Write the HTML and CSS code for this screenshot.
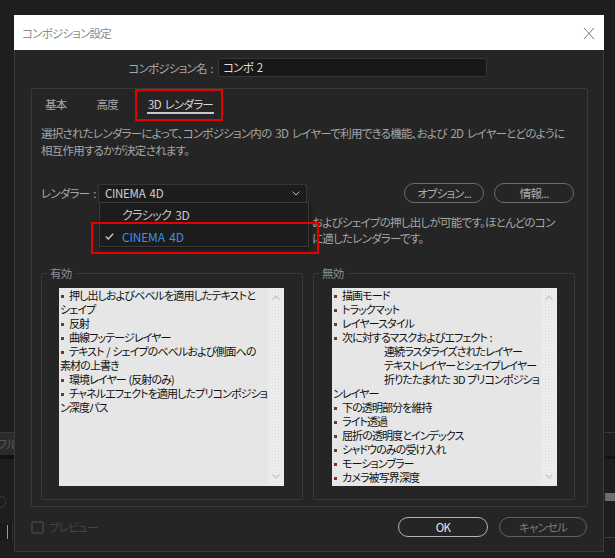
FILE: index.html
```html
<!DOCTYPE html>
<html lang="ja">
<head>
<meta charset="utf-8">
<title>コンポジション設定</title>
<link rel="stylesheet" href="styles.css">
</head>
<body>
<div class="app-bit app-left-btn"><span>フル</span></div>
<div class="app-bit app-left-strip"></div>
<div class="app-bit app-left-icon"></div>
<div class="app-bit app-left-field"></div>
<div class="app-bit app-right-line1"></div>
<div class="app-bit app-right-strip"></div>
<div class="app-bit app-right-bar"></div>
<div class="app-bit app-right-line2"></div>

<div class="dialog">
  <div class="titlebar">
    <span class="title">コンポジション設定</span>
    <svg class="close" width="12" height="13" viewBox="0 0 12 13"><path d="M1 1 L11 12 M11 1 L1 12" stroke="#7a7a7a" stroke-width="1" fill="none"/></svg>
  </div>
  <div class="body">
    <div class="name-row">
      <span class="name-label">コンポジション名 :</span>
      <div class="name-input">コンポ 2</div>
    </div>
    <div class="panel">
      <div class="tabs">
        <span class="tab">基本</span>
        <span class="tab">高度</span>
        <span class="tab active">3D レンダラー</span>
      </div>
      <p class="desc">選択されたレンダラーによって、コンポジション内の 3D レイヤーで利用できる機能、および 2D レイヤーとどのように<br>相互作用するかが決定されます。</p>
      <div class="renderer-row">
        <span class="renderer-label">レンダラー :</span>
        <div class="select">
          <span>CINEMA 4D</span>
          <svg class="chev" width="8" height="5" viewBox="0 0 8 5"><path d="M0.5 0.5 L4 4 L7.5 0.5" stroke="#b8b8b8" stroke-width="1" fill="none"/></svg>
        </div>
        <div class="spacer"></div>
        <button class="pill">オプション...</button>
        <button class="pill">情報...</button>
      </div>
      <p class="renderer-info">およびシェイプの押し出しが可能です。ほとんどのコン<br>に適したレンダラーです。</p>
      <div class="groups">
        <fieldset class="group">
          <legend>有効</legend>
          <div class="listbox">
            <div class="list-text">
              <div class="item"><i class="bullet"></i>押し出しおよびベベルを適用したテキストと<br>シェイプ</div>
              <div class="item"><i class="bullet"></i>反射</div>
              <div class="item"><i class="bullet"></i>曲線フッテージレイヤー</div>
              <div class="item"><i class="bullet"></i>テキスト / シェイプのベベルおよび側面への<br>素材の上書き</div>
              <div class="item"><i class="bullet"></i>環境レイヤー (反射のみ)</div>
              <div class="item"><i class="bullet"></i>チャネルエフェクトを適用したプリコンポジショ<br>ン深度パス</div>
            </div>
            <div class="scrollbar">
              <svg width="8" height="5" viewBox="0 0 8 5"><path d="M0.5 4.5 L4 1 L7.5 4.5" stroke="#c4c4c4" stroke-width="1.2" fill="none"/></svg>
              <svg width="8" height="5" viewBox="0 0 8 5"><path d="M0.5 0.5 L4 4 L7.5 0.5" stroke="#c4c4c4" stroke-width="1.2" fill="none"/></svg>
            </div>
          </div>
        </fieldset>
        <fieldset class="group group-right">
          <legend>無効</legend>
          <div class="listbox">
            <div class="list-text">
              <div class="item"><i class="bullet"></i>描画モード</div>
              <div class="item"><i class="bullet"></i>トラックマット</div>
              <div class="item"><i class="bullet"></i>レイヤースタイル</div>
              <div class="item"><i class="bullet"></i>次に対するマスクおよびエフェクト :</div>
              <div class="item sub">連続ラスタライズされたレイヤー</div>
              <div class="item sub">テキストレイヤーとシェイプレイヤー</div>
              <div class="item sub">折りたたまれた 3D プリコンポジショ</div>
              <div class="item">ンレイヤー</div>
              <div class="item"><i class="bullet"></i>下の透明部分を維持</div>
              <div class="item"><i class="bullet"></i>ライト透過</div>
              <div class="item"><i class="bullet"></i>屈折の透明度とインデックス</div>
              <div class="item"><i class="bullet"></i>シャドウのみの受け入れ</div>
              <div class="item"><i class="bullet"></i>モーションブラー</div>
              <div class="item"><i class="bullet"></i>カメラ被写界深度</div>
            </div>
            <div class="scrollbar">
              <svg width="8" height="5" viewBox="0 0 8 5"><path d="M0.5 4.5 L4 1 L7.5 4.5" stroke="#c4c4c4" stroke-width="1.2" fill="none"/></svg>
              <svg width="8" height="5" viewBox="0 0 8 5"><path d="M0.5 0.5 L4 4 L7.5 0.5" stroke="#c4c4c4" stroke-width="1.2" fill="none"/></svg>
            </div>
          </div>
        </fieldset>
      </div>
    </div>
    <div class="footer">
      <label class="preview"><span class="checkbox"></span><span>プレビュー</span></label>
      <div class="spacer"></div>
      <button class="pill pill-ok">OK</button>
      <button class="pill pill-cancel">キャンセル</button>
    </div>
  </div>
</div>

<div class="menu">
  <div class="menu-item"><span class="check"></span>クラシック 3D</div>
  <div class="menu-item selected"><span class="check"><svg width="9" height="7" viewBox="0 0 9 7"><path d="M0.8 3.6 L3.2 6 L8.2 0.8" stroke="#c8c8c8" stroke-width="1.4" fill="none"/></svg></span>CINEMA 4D</div>
</div>
<div class="highlight hl-tab"></div>
<div class="highlight hl-menu"></div>
</body>
</html>
```

FILE: styles.css
```css
* { box-sizing: border-box; }
html, body { margin: 0; }
body {
  position: relative;
  width: 615px;
  height: 558px;
  overflow: hidden;
  background: #1e1e1e;
  font-family: "Noto Sans CJK JP", "Noto Sans", sans-serif;
  font-size: 11.5px;
  letter-spacing: -0.75px;
  word-spacing: 2px;
  color: #a8a8a8;
  padding-top: 15px;
  font-feature-settings: "palt";
}

/* background application fragments */
.app-bit { position: absolute; }
.app-left-btn { left: 0; top: 432px; width: 14px; height: 23px; background: #2b2b2b; border-top: 1px solid #3a3a3a; overflow: hidden; }
.app-left-btn span { position: absolute; left: -3px; top: 3px; color: #5a5a5a; font-size: 12px; line-height: 16px; white-space: nowrap; }
.app-left-strip { left: 0; top: 455px; width: 14px; height: 4px; background: #121212; }
.app-left-icon { left: -4px; top: 496px; width: 10px; height: 12px; border: 1px solid #3a3a3a; border-radius: 5px; }
.app-left-field { left: 0; top: 523px; width: 13px; height: 18px; background: #1a1a1a; border-right: 1px solid #2e2e2e; }
.app-left-field::after { content: ""; position: absolute; left: 7px; top: 2px; width: 1px; height: 14px; background: #9a9a9a; }
.app-right-line1 { left: 605px; top: 432px; width: 10px; height: 1px; background: #3c3c3c; }
.app-right-strip { left: 605px; top: 456px; width: 10px; height: 3px; background: #121212; }
.app-right-bar { left: 605px; top: 493px; width: 10px; height: 8px; background: #6e6e6e; }
.app-right-line2 { left: 605px; top: 537px; width: 10px; height: 1px; background: #3c3c3c; }

.dialog {
  margin-left: 14px;
  width: 590px;
  height: 537px;
  background: #252525;
  border: 1px solid #3a3a3a;
  border-top: none;
}
.titlebar {
  height: 35px;
  background: #ffffff;
  display: flex;
  align-items: center;
  justify-content: space-between;
  padding: 0 9px 0 8px;
  margin: 0 -1px;
}
.title { color: #8c8c8c; line-height: 16px; }
.close { display: block; margin-top: 1px; }

.name-row {
  display: flex;
  align-items: center;
  gap: 5px;
  margin-top: 8px;
  height: 19px;
}
.name-label { width: 198px; text-align: right; color: #a8a8a8; line-height: 16px; white-space: nowrap; }
.name-input {
  width: 269px;
  height: 19px;
  background: #181818;
  border: 1px solid #363636;
  border-radius: 2px;
  color: #dcdcdc;
  padding: 0 4px;
  line-height: 17px;
}

.panel {
  margin: 11px 0 0 16px;
  width: 557px;
  height: 419px;
  border: 1px solid #393939;
  border-radius: 2px;
}
.tabs {
  display: flex;
  gap: 28px;
  margin: 7px 0 0 12px;
  height: 18px;
}
.tab { line-height: 16px; height: 18px; color: #a8a8a8; padding: 0 1px; white-space: nowrap; }
.tab.active { color: #d6d6d6; border-bottom: 2px solid #c8c8c8; }

.desc {
  margin: 11px 0 0 9px;
  line-height: 17px;
  white-space: nowrap;
  color: #a6a6a6;
}
.renderer-row {
  display: flex;
  align-items: center;
  margin: 24px 13px 0 9px;
  height: 20px;
}
.renderer-label { width: 57px; line-height: 16px; white-space: nowrap; }
.select {
  width: 209px;
  height: 19px;
  background: #1c1c1c;
  border: 1px solid #363636;
  border-radius: 2px;
  display: flex;
  align-items: center;
  justify-content: space-between;
  padding: 0 6px;
  color: #d0d0d0;
  line-height: 16px;
  letter-spacing: -0.3px;
}
.chev { display: block; }
.spacer { flex: 1; }
.pill {
  font: inherit;
  letter-spacing: -0.8px;
  font-feature-settings: "palt";
  background: transparent;
  border: 1.5px solid #6c6c6c;
  border-radius: 10px;
  height: 20px;
  width: 80px;
  color: #b0b0b0;
  padding: 0;
  line-height: 16px;
  margin-left: 10px;
}
.renderer-info {
  margin: 11px 0 0 280px;
  line-height: 16px;
  white-space: nowrap;
  color: #a6a6a6;
}

.groups {
  display: flex;
  gap: 10px;
  margin: 20px 0 0 9px;
}
.group {
  margin: 0;
  width: 262px;
  border: 1px solid #393939;
  border-radius: 3px;
  padding: 8px 17px 13px 17px;
  min-width: 0;
}
.group-right { padding-left: 18px; padding-right: 16px; }
.group legend {
  padding: 0 3px;
  margin-left: -12px;
  line-height: 14px;
  color: #8e8e8e;
}
.group-right legend { margin-left: -13px; }

.listbox {
  width: 225px;
  height: 198px;
  background: #e6e6e6;
  display: flex;
  overflow: hidden;
}
.list-text {
  flex: 1;
  min-width: 0;
  overflow: hidden;
  color: #111111;
  font-size: 11px;
  letter-spacing: -0.9px;
  word-spacing: 1px;
  line-height: 14px;
  padding: 0 0 0 1px;
  white-space: nowrap;
}
.item { white-space: nowrap; }
.item.sub { padding-left: 51px; }
.bullet {
  display: inline-block;
  width: 3px;
  height: 3px;
  background: #8a2a2a;
  margin: 0 5px 0 1px;
  vertical-align: middle;
  position: relative;
  top: -1px;
}
.scrollbar {
  width: 16px;
  background-color: #ededed;
  background-image: radial-gradient(#dcdcdc 0.6px, transparent 0.7px);
  background-size: 3px 3px;
  display: flex;
  flex-direction: column;
  align-items: center;
  justify-content: space-between;
  padding: 7px 0;
}
.scrollbar svg { display: block; }

.footer {
  display: flex;
  align-items: center;
  margin: 10px 16px 0 16px;
  height: 20px;
}
.preview { display: flex; align-items: center; gap: 5px; color: #464646; line-height: 16px; }
.checkbox {
  width: 13px;
  height: 13px;
  border: 2px solid #3c3c3c;
  border-radius: 2px;
}
.pill-ok { width: 90px; border-color: #b4b4b4; color: #e6e6e6; margin-left: 0; }
.pill-cancel { width: 88px; border-color: #626262; color: #7c7c7c; margin-left: 11px; }

/* dropdown menu overlay */
.menu {
  position: absolute;
  left: 99px;
  top: 202px;
  width: 210px;
  height: 45px;
  background: #1c1c1c;
  border: 1px solid #3a3a3a;
  box-shadow: 1px 2px 4px rgba(0,0,0,0.5);
}
.menu-item {
  display: flex;
  align-items: center;
  height: 22px;
  color: #c8c8c8;
  font-size: 12px;
  letter-spacing: -0.6px;
}
.menu-item .check { width: 22px; padding-left: 5px; display: flex; align-items: center; }
.menu-item.selected { color: #3d8fe6; letter-spacing: -0.2px; }

.highlight { position: absolute; border: 2px solid #e60000; }
.hl-tab { left: 135px; top: 89px; width: 88px; height: 32px; }
.hl-menu { left: 91px; top: 222px; width: 228px; height: 32px; }
```
